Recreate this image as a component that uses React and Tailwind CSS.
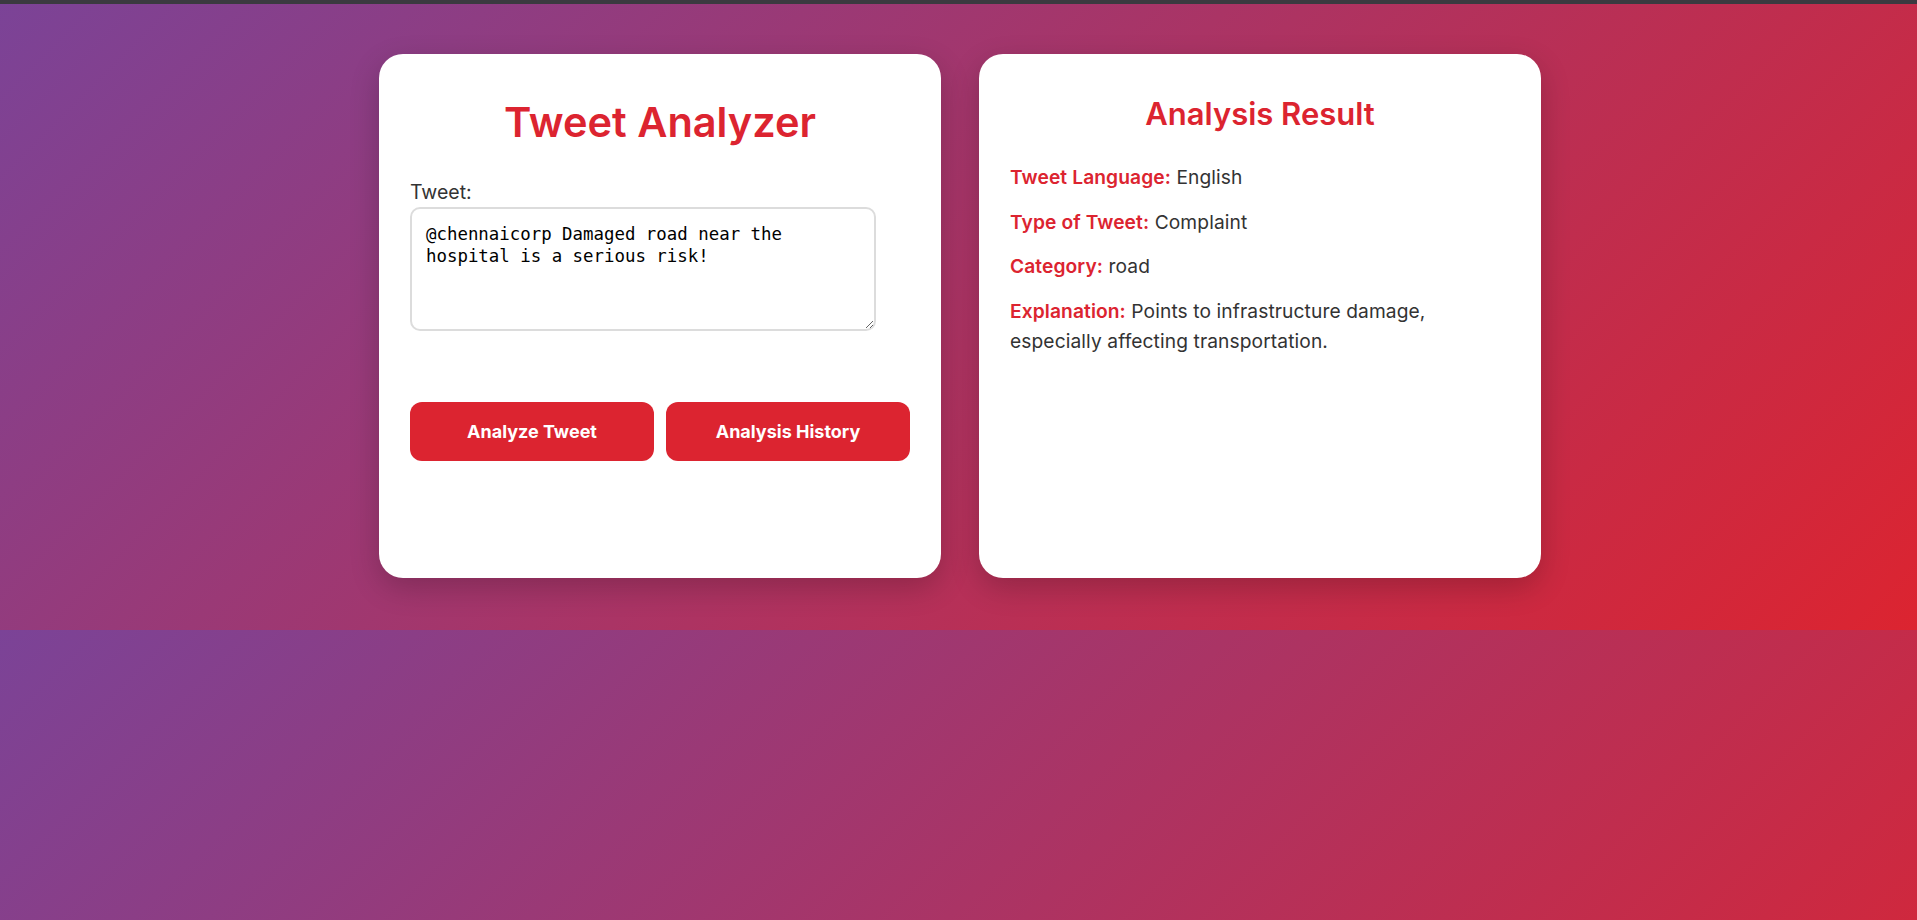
import React from "react";

export default function App() {
  return (
    <div className="min-h-[920px] bg-[linear-gradient(135deg,#7b4397,#dc2430)] bg-[length:100%_630px] bg-size-[100%_630px] bg-repeat font-['Inter',sans-serif]">
      <div className="h-[4px] bg-[#3b3a40]" />
      <div className="flex justify-center gap-[38px] pt-[50px] pl-[3px]">
        <div className="w-[562px] h-[524px] bg-white rounded-[24px] px-[31px] shadow-[0_10px_30px_rgba(0,0,0,0.2)]">
          <h1 className="pt-[44px] text-center text-[41.5px] leading-[48px] font-semibold text-[#dc2430]">
            Tweet Analyzer
          </h1>
          <label className="block mt-[32px] text-[19.5px] leading-[28px] text-[#333]">
            Tweet:
          </label>
          <textarea
            spellCheck={false}
            defaultValue="@chennaicorp Damaged road near the hospital is a serious risk!"
            className="block mt-[1px] w-[466px] h-[124px] border-2 border-[#dcdcdc] rounded-[10px] p-[14px] font-['DejaVu_Sans_Mono',monospace] text-[17.4px] leading-[22px] text-black outline-none bg-white"
          />
          <div className="flex gap-[12px] mt-[71px]">
            <button className="w-[244px] h-[59px] rounded-[12px] bg-[#dc2430] text-white text-[18px] font-bold">
              Analyze Tweet
            </button>
            <button className="w-[244px] h-[59px] rounded-[12px] bg-[#dc2430] text-white text-[18px] font-bold">
              Analysis History
            </button>
          </div>
        </div>
        <div className="w-[562px] h-[524px] bg-white rounded-[24px] px-[31px] shadow-[0_10px_30px_rgba(0,0,0,0.2)]">
          <h2 className="pt-[42px] text-center text-[31px] leading-[36px] font-semibold text-[#dc2430]">
            Analysis Result
          </h2>
          <div className="mt-[30px] flex flex-col gap-[14.5px] text-[19.2px] leading-[30px] tracking-[0.1px] text-[#333]">
            <p>
              <span className="font-semibold text-[#dc2430]">Tweet Language:</span> English
            </p>
            <p>
              <span className="font-semibold text-[#dc2430]">Type of Tweet:</span> Complaint
            </p>
            <p>
              <span className="font-semibold text-[#dc2430]">Category:</span> road
            </p>
            <p>
              <span className="font-semibold text-[#dc2430]">Explanation:</span> Points to infrastructure damage,
              <br />
              especially affecting transportation.
            </p>
          </div>
        </div>
      </div>
    </div>
  );
}
